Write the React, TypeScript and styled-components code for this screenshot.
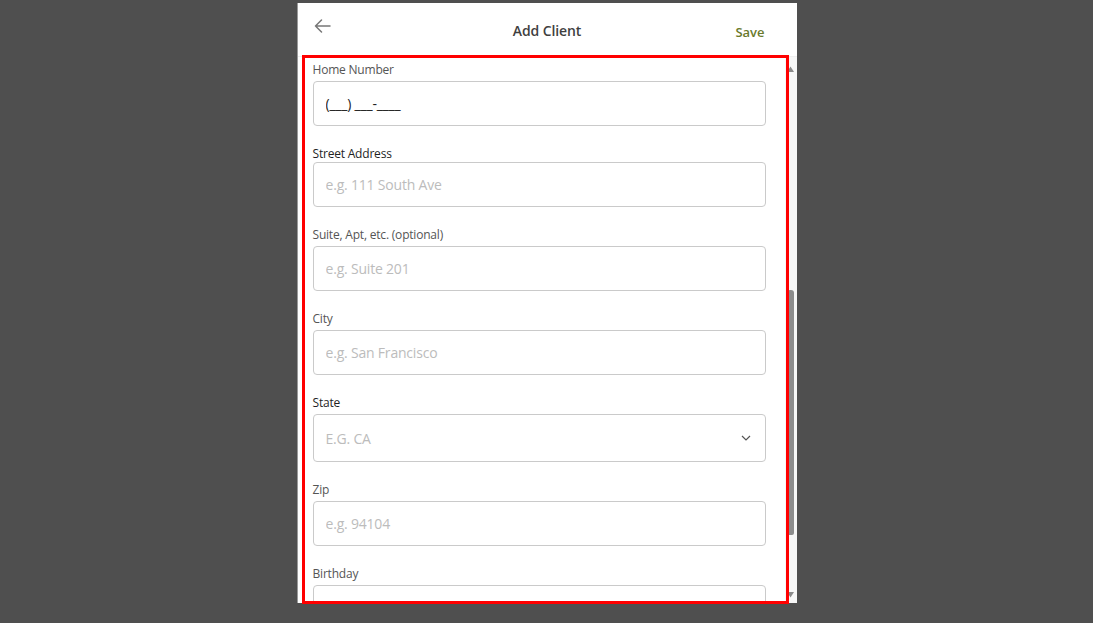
import React from "react";
import styled, { createGlobalStyle } from "styled-components";

const Global = createGlobalStyle`
  html, body { margin: 0; padding: 0; background: #4f4f4f; }
  body { font-family: "Open Sans", "Noto Sans", Arial, sans-serif; }
  * { box-sizing: border-box; }
`;

const Page = styled.div`
  display: flex;
  justify-content: center;
  padding-top: 3px;
  height: 623px;
  overflow: hidden;
`;

const Panel = styled.div`
  position: relative;
  width: 500px;
  height: 600px;
  background: #ffffff;
  border-left: 1px solid #9a9a9a;
  display: flex;
  flex-direction: column;
`;

const Header = styled.div`
  height: 54px;
  flex: none;
  display: grid;
  grid-template-columns: 80px 1fr 80px;
  align-items: center;
  padding: 0 16px 0 16px;
  border-bottom: 1px solid #efefef;
`;

const BackButton = styled.div`
  display: flex;
  align-items: center;
  margin-bottom: 8px;
  color: #777;
`;

const Title = styled.div`
  text-align: center;
  font-size: 14px;
  font-weight: 600;
  color: #3f3f3f;
  padding-top: 2px;
  letter-spacing: -0.1px;
`;

const SaveButton = styled.div`
  text-align: right;
  font-size: 13px;
  font-weight: 600;
  color: #6a7a2c;
  padding-top: 4px;
  padding-right: 16px;
`;

const Body = styled.div`
  flex: 1;
  display: flex;
  min-height: 0;
`;

const Content = styled.div`
  flex: 1;
  overflow: hidden;
  padding: 5px 19px 0 15px;
  display: flex;
  flex-direction: column;
  gap: 20px;
`;

const Field = styled.div`
  display: flex;
  flex-direction: column;
`;

const Label = styled.label<{ $dark?: boolean; $tight?: boolean }>`
  font-size: 12px;
  line-height: 16px;
  letter-spacing: -0.2px;
  color: ${(p) => (p.$dark ? "#1f1f1f" : "#555555")};
  margin-bottom: ${(p) => (p.$tight ? "0px" : "3px")};
`;

const Input = styled.input`
  width: 100%;
  height: 45px;
  border: 1px solid #cacaca;
  border-radius: 4px;
  padding: 0 12px;
  font-family: "Open Sans", "Noto Sans", Arial, sans-serif;
  font-size: 14px;
  letter-spacing: -0.2px;
  color: #222;
  background: #fff;
  outline: none;
  &::placeholder { color: #bcbcbc; }
`;

const SelectBox = styled.div`
  height: 48px;
  border: 1px solid #cacaca;
  border-radius: 4px;
  padding: 0 14px 0 12px;
  display: flex;
  align-items: center;
  justify-content: space-between;
`;

const SelectPlaceholder = styled.span`
  font-size: 14px;
  letter-spacing: -0.2px;
  color: #bcbcbc;
  text-transform: uppercase;
`;

const ScrollBar = styled.div`
  width: 12px;
  flex: none;
  background: #f7f7f7;
  display: flex;
  flex-direction: column;
  align-items: center;
`;

const ArrowCell = styled.div<{ $h: number }>`
  height: ${(p) => p.$h}px;
  flex: none;
  display: flex;
  align-items: center;
  justify-content: center;
`;

const Thumb = styled.div`
  width: 7px;
  height: 245px;
  margin-top: 209px;
  background: #8c8c8c;
  border-radius: 3px 3px 2px 2px;
  flex: none;
`;

const Spacer = styled.div`
  flex: 1;
`;

const Annotation = styled.div`
  position: absolute;
  left: 4px;
  top: 52px;
  width: 487px;
  height: 549px;
  border: 3px solid #ff0000;
  pointer-events: none;
`;

const fields: { label: string; placeholder?: string; value?: string; dark?: boolean; tight?: boolean; select?: boolean }[] = [
  { label: "Home Number", value: "(___) ___-____" },
  { label: "Street Address", placeholder: "e.g. 111 South Ave", dark: true, tight: true },
  { label: "Suite, Apt, etc. (optional)", placeholder: "e.g. Suite 201" },
  { label: "City", placeholder: "e.g. San Francisco" },
  { label: "State", placeholder: "E.G. CA", dark: true, select: true },
  { label: "Zip", placeholder: "e.g. 94104" },
  { label: "Birthday", placeholder: "" },
];

export default function App() {
  return (
    <>
      <Global />
      <Page>
        <Panel>
          <Header>
            <BackButton>
              <svg width="17" height="14" viewBox="0 0 17 14" fill="none">
                <path d="M16 7H1.5M7.5 1L1.5 7L7.5 13" stroke="#777" strokeWidth="1.5" strokeLinecap="round" strokeLinejoin="round" />
              </svg>
            </BackButton>
            <Title>Add Client</Title>
            <SaveButton>Save</SaveButton>
          </Header>
          <Body>
            <Content>
              {fields.map((f) => (
                <Field key={f.label}>
                  <Label $dark={f.dark} $tight={f.tight}>{f.label}</Label>
                  {f.select ? (
                    <SelectBox>
                      <SelectPlaceholder>{f.placeholder}</SelectPlaceholder>
                      <svg width="10" height="6" viewBox="0 0 10 6" fill="none">
                        <path d="M1 1L5 5L9 1" stroke="#555" strokeWidth="1.2" />
                      </svg>
                    </SelectBox>
                  ) : f.value ? (
                    <Input defaultValue={f.value} />
                  ) : (
                    <Input placeholder={f.placeholder} />
                  )}
                </Field>
              ))}
            </Content>
            <ScrollBar>
              <ArrowCell $h={24}>
                <svg width="7" height="6" viewBox="0 0 7 6"><path d="M3.5 0.5L7 6H0Z" fill="#8a8a8a" /></svg>
              </ArrowCell>
              <Thumb />
              <Spacer />
              <ArrowCell $h={16}>
                <svg width="7" height="6" viewBox="0 0 7 6"><path d="M0 0H7L3.5 5.5Z" fill="#8a8a8a" /></svg>
              </ArrowCell>
            </ScrollBar>
          </Body>
          <Annotation />
        </Panel>
      </Page>
    </>
  );
}
